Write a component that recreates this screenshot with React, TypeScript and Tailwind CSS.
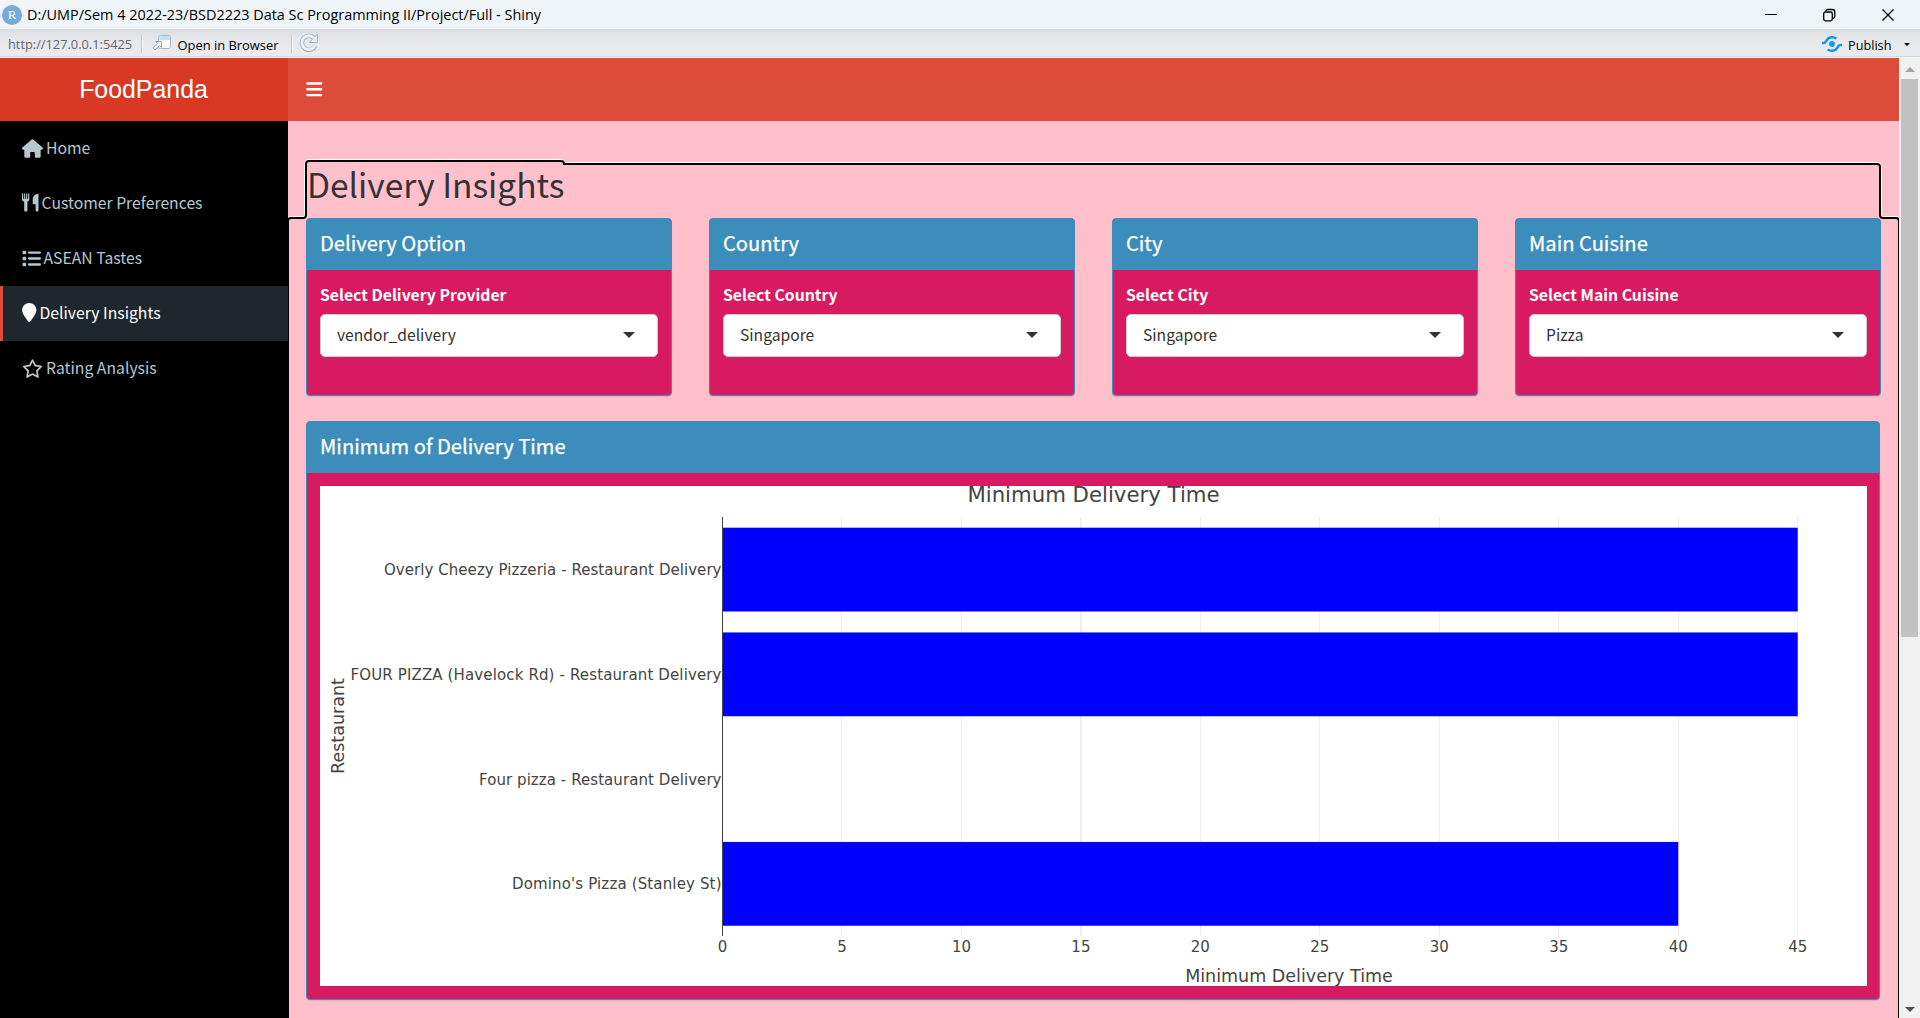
import type { ReactNode } from 'react';
import { FaBars, FaHouse, FaList, FaLocationPin, FaRegStar } from 'react-icons/fa6';

const SANS = "font-['Noto_Sans_CJK_SC',sans-serif]";
const UI = "font-['Open_Sans',sans-serif]";

function TitleBar() {
  return (
    <div className="flex h-[29px] items-center bg-[#eff4f9] pl-[2px]">
      <div className="flex size-5 items-center justify-center rounded-full bg-[#75aadb] font-['Liberation_Serif',serif] text-[13px] leading-none text-white">
        R
      </div>
      <div className="ml-[5px] text-[14.44px] leading-[20px] whitespace-nowrap text-black">
        D:/UMP/Sem 4 2022-23/BSD2223 Data Sc Programming II/Project/Full - Shiny
      </div>
      <div className="mr-[26px] ml-auto flex items-center text-black">
        <svg width="130" height="14" viewBox="0 0 130 14" fill="none" stroke="currentColor" strokeWidth="1.3">
          <path d="M1 6.500h12" strokeWidth="1" />
          <rect x="59.700" y="4" width="8.600" height="8.800" rx="1.800" />
          <path d="M62 3.400C62 2.200 62.800 1.500 64 1.500h4.200c1.500 0 2.600 1.100 2.600 2.600v4.200c0 1-.6 1.900-1.700 2" />
          <path d="M118.500 1.500l11 11M129.500 1.500l-11 11" />
        </svg>
      </div>
    </div>
  );
}

function Divider() {
  return <div className="h-[19px] w-[2px] border-l border-[#bfc2c6] bg-white" />;
}

function Toolbar() {
  return (
    <div className="flex h-[29px] items-center border-b border-[#f4f5f7] bg-linear-to-b from-[#dadce0] via-[#e6e8eb] via-35% to-[#e9ebee] shadow-[inset_0_-1px_0_#d3d6da]">
      <div className="mt-[1px] ml-[8px] w-[133px] text-[12.8px] leading-5 text-[#666]">http://127.0.0.1:5425</div>
      <Divider />
      <svg className="ml-[9px]" width="20" height="18" viewBox="0 0 20 18">
        <rect x="6.500" y="1.500" width="12" height="13" rx="2" fill="#fbfcfd" stroke="#a9b9c8" />
        <path d="M7 6V3.500C7 2.500 7.500 2 8.500 2h8c1 0 1.500.5 1.500 1.500V6z" fill="#c4e0f6" />
        <path d="M3.500 7.500h6v6L7.600 11.600 3.200 16 1 13.800l4.400-4.400z" fill="#f4f6f8" stroke="#8b98a4" strokeWidth=".9" />
      </svg>
      <div className="mt-[4px] ml-[5.500px] w-[113px] text-[12.9px] leading-5 whitespace-nowrap text-black">Open in Browser</div>
      <Divider />
      <svg className="ml-[6.500px]" width="20" height="20" viewBox="0 0 20 20" fill="none">
        <path d="M14.700 4.800A7 7 0 1 0 16.300 12.800" stroke="#a8b3bf" strokeWidth="4.600" />
        <path d="M18.500 1v8.500H10.500z" fill="#eaf1f8" stroke="#a8b3bf" />
        <path d="M14.900 5.100A6.900 6.900 0 1 0 15.900 12.700" stroke="#eaf1f8" strokeWidth="2.800" />
      </svg>
      <svg className="mt-[1px] ml-auto" width="22" height="18" viewBox="0 0 22 18" fill="none" stroke="#0f9aef" strokeWidth="2.400">
        <circle cx="11" cy="9" r="2.900" fill="#0f9aef" stroke="none" />
        <path d="M1 8h1.800C4.500 8 5 6.500 6 4.800 7.200 2.900 9 2.200 11 2.200c1.900 0 3.300.5 4.400 1.500" />
        <path d="M21 10h-1.800c-1.700 0-2.200 1.500-3.200 3.200-1.200 1.900-3 2.600-5 2.600-1.900 0-3.300-.5-4.400-1.500" />
      </svg>
      <div className="mt-[4px] ml-[5px] w-[56px] text-[12.7px] leading-5 text-black">Publish</div>
      <div className="mt-[2px] mr-[10px] size-0 border-x-[3px] border-t-[3.500px] border-x-transparent border-t-black" />
    </div>
  );
}

function Cutlery() {
  return (
    <svg className="mb-[1px]" width="17" height="19" viewBox="0 0 17 19" fill="currentColor">
      <path d="M0 .5h1.200v5.200h.9V.5h1.100v5.200h.9V.5h1.100v5.200h.9V.5h1.200v5.800c0 1.400-.8 2-1.900 2.500v8.400c0 .9-.6 1.300-1.600 1.300s-1.600-.4-1.600-1.300V8.800C.9 8.300 0 7.700 0 6.300z" />
      <path d="M16.500.7v16.600c0 .8-.5 1.200-1.400 1.200s-1.500-.4-1.500-1.200v-6h-2.200c-.5 0-.7-.3-.7-.8V6.500c0-3.400 2.500-5.800 5.800-5.800z" />
    </svg>
  );
}

const MENU: { label: string; icon: ReactNode; gap: string; active?: boolean }[] = [
  { label: 'Home', icon: <FaHouse className="h-[19px] w-[21px]" />, gap: 'gap-[3px]' },
  { label: 'Customer Preferences', icon: <Cutlery />, gap: 'gap-[2.500px]' },
  { label: 'ASEAN Tastes', icon: <FaList className="mt-[1px] size-[19px]" />, gap: 'gap-[2.500px]' },
  { label: 'Delivery Insights', icon: <FaLocationPin className="mb-[1px] h-[19px] w-[14.500px]" />, gap: 'gap-[3px]', active: true },
  { label: 'Rating Analysis', icon: <FaRegStar className="h-[19px] w-[21px]" />, gap: 'gap-[3px]' },
];

function Sidebar() {
  return (
    <nav className="w-[289px] shrink-0 bg-black">
      {MENU.map((m) => (
        <div
          key={m.label}
          className={`flex h-[55px] w-[288px] items-center border-l-[3px] pb-[1px] pl-[19px] text-[15.75px] leading-6 ${m.gap} ${
            m.active ? 'border-[#dd4b39] bg-[#1e282c] text-white' : 'border-transparent text-[#b8c7ce]'
          }`}
        >
          {m.icon}
          <span className="whitespace-nowrap">{m.label}</span>
        </div>
      ))}
    </nav>
  );
}

function Box({ title, className, children }: { title: string; className: string; children: ReactNode }) {
  return (
    <section
      className={`overflow-hidden rounded-[4px] border border-[#3c8dbc] bg-[#d81b60] shadow-[0_1px_1px_rgba(0,0,0,0.1)] ${className}`}
    >
      <h3 className="h-[51px] bg-[#3c8dbc] pt-[8px] pl-[13px] text-[20.15px] leading-[31px] font-normal text-white [-webkit-text-stroke:0.25px_white]">
        {title}
      </h3>
      {children}
    </section>
  );
}

function SelectBox({ title, label, value }: { title: string; label: string; value: string }) {
  return (
    <Box title={title} className="h-[178px]">
      <div className="px-[13px] pt-[13px]">
        <div className="text-[15.77px] leading-6 font-bold text-white">{label}</div>
        <div className="mt-[7px] flex h-[43px] items-center justify-between rounded-[5px] border border-[#ccc] bg-white pr-[22px] pb-[2px] pl-[16px] text-[15.65px] text-[#333]">
          <span>{value}</span>
          <span className="mt-[1px] size-0 border-x-[6px] border-t-[6px] border-x-transparent border-t-[#333]" />
        </div>
      </div>
    </Box>
  );
}

const RESTAURANTS = [
  { name: 'Overly Cheezy Pizzeria - Restaurant Delivery', time: 45, width: 337.5 },
  { name: 'FOUR PIZZA (Havelock Rd) - Restaurant Delivery', time: 45, width: 371 },
  { name: 'Four pizza - Restaurant Delivery', time: 0, width: 242.5 },
  { name: "Domino's Pizza (Stanley St)", time: 40, width: 209.5 },
];
const TICKS = [0, 5, 10, 15, 20, 25, 30, 35, 40, 45];
const X0 = 402.5;
const STEP = 119.47;

function Chart() {
  return (
    <svg className="block bg-white font-['DejaVu_Sans',sans-serif]" width="1547" height="500" viewBox="0 0 1547 500" fill="#444">
      {TICKS.slice(1).map((t) => (
        <rect key={t} x={Math.round(X0 - 0.5 + (t / 5) * STEP)} y="31" width={t === 15 ? 2 : 1} height="419" fill="#eee" />
      ))}
      {RESTAURANTS.map((r, i) => (
        <g key={r.name}>
          <rect x={X0} y={41.7 + i * 104.75} width={(r.time / 5) * STEP} height="83.8" fill="#00f" />
          <text x="401.500" y={89 + i * 104.75} fontSize="15" textAnchor="end" textLength={r.width}>
            {r.name}
          </text>
        </g>
      ))}
      <rect x="402" y="31" width="1" height="419" />
      {TICKS.map((t) => (
        <text key={t} x={X0 + (t / 5) * STEP} y="466" fontSize="15" textAnchor="middle">
          {t}
        </text>
      ))}
      <text x="773.500" y="15.500" fontSize="21.25" textAnchor="middle">
        Minimum Delivery Time
      </text>
      <text x="969" y="495.500" fontSize="17.5" textAnchor="middle">
        Minimum Delivery Time
      </text>
      <text transform="translate(24 240) rotate(-90)" fontSize="17.5" textAnchor="middle">
        Restaurant
      </text>
    </svg>
  );
}

/* Focus ring that wraps the heading, the row and the tab panel. */
function FocusRing() {
  const d = 'M0 900V100q0-3 3-3h12q3 0 3-3V43q0-3 3-3h252q3 0 3 3h1313q3 0 3 3v48q0 3 3 3h13q3 0 3 3V900';
  return (
    <svg className="pointer-events-none absolute top-0 left-0" width="1611" height="897" viewBox="0 0 1611 897" fill="none">
      <path d={d} stroke="#fff" strokeWidth="2" transform="translate(0 -1)" />
      <path d="M16.500 94V43q0-4 4-4M1593.500 46v48" stroke="#fff" strokeWidth="1" />
      <path d={d} stroke="#000" strokeWidth="2" />
    </svg>
  );
}

function Scrollbar() {
  return (
    <div className="flex w-[21px] shrink-0 flex-col items-center bg-[#f1f1f1]">
      <div className="mt-[9px] size-0 border-x-[5px] border-b-[5px] border-x-transparent border-b-[#a3a3a3]" />
      <div className="mt-[7px] h-[558px] w-[17px] bg-[#c1c1c1]" />
      <div className="mt-auto mb-[6px] size-0 border-x-[5px] border-t-[5px] border-x-transparent border-t-[#505050]" />
    </div>
  );
}

export default function App() {
  return (
    <div className={`flex h-[1018px] w-[1920px] flex-col overflow-hidden ${UI}`}>
      <TitleBar />
      <Toolbar />
      <div className={`flex min-h-0 flex-1 ${SANS}`}>
        <div className="flex w-[1899px] flex-col">
          <header className="flex h-[63px] shrink-0 bg-[#dd4b39] text-white">
            <div className="flex w-[288px] items-center justify-center bg-[#d73925] pr-[1px] font-['Liberation_Sans',sans-serif] text-[24.9px]">
              FoodPanda
            </div>
            <FaBars className="mt-[22px] ml-[18px] h-[18.500px] w-[16.500px]" />
          </header>
          <div className="flex min-h-0 flex-1">
            <Sidebar />
            <main className="relative -ml-px w-[1611px] pr-[19px] pl-[18px]">
              <div className="absolute inset-y-0 right-0 left-0 bg-[#ffc0cb]" />
              <div className="absolute top-[97px] bottom-0 left-0 w-px bg-black" />
              <FocusRing />
              <div className="relative">
                <h2 className="h-[97px] pt-[41px] pl-px text-[33.5px] leading-[43px] text-[#333]">Delivery Insights</h2>
                <div className="-mr-[0.6px] grid grid-cols-4 gap-[37.4px]">
                  <SelectBox title="Delivery Option" label="Select Delivery Provider" value="vendor_delivery" />
                  <SelectBox title="Country" label="Select Country" value="Singapore" />
                  <SelectBox title="City" label="Select City" value="Singapore" />
                  <SelectBox title="Main Cuisine" label="Select Main Cuisine" value="Pizza" />
                </div>
                <Box title="Minimum of Delivery Time" className="mt-[25px] h-[579px]">
                  <div className="px-[13px] pt-[13px]">
                    <Chart />
                  </div>
                </Box>
              </div>
            </main>
          </div>
        </div>
        <Scrollbar />
      </div>
    </div>
  );
}
